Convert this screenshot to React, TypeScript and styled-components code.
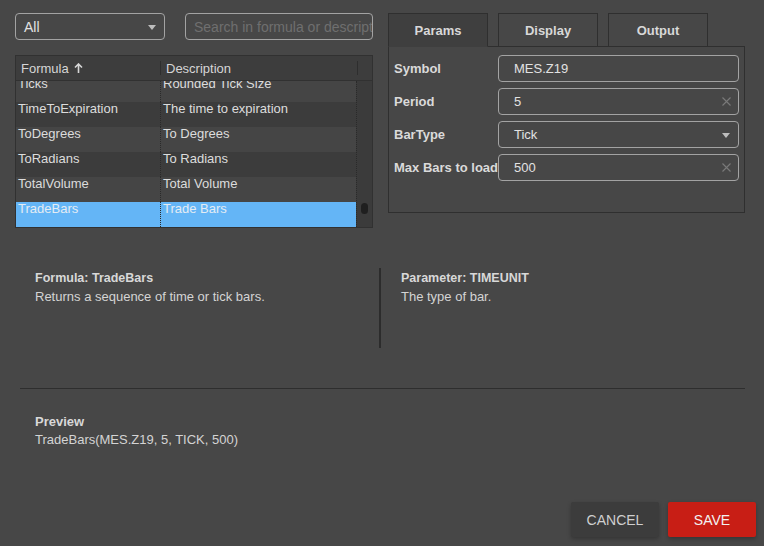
import React from "react";
import styled, { createGlobalStyle } from "styled-components";

const Global = createGlobalStyle`
  html, body { margin: 0; padding: 0; background: #474747; }
  body { font-family: "Liberation Sans", Arial, sans-serif; }
  * { box-sizing: border-box; }
`;

const Page = styled.div`
  width: 764px;
  height: 546px;
  background: #474747;
  color: #dcdcdc;
  display: flex;
  flex-direction: column;
  overflow: hidden;
`;

const Top = styled.div`
  display: flex;
  gap: 15px;
  padding: 13px 0 0 15px;
`;

const LeftCol = styled.div`
  width: 358px;
  display: flex;
  flex-direction: column;
  gap: 15px;
`;

const Filters = styled.div`
  display: flex;
  gap: 20px;
`;

const Field = styled.div<{ $w?: number }>`
  position: relative;
  width: ${(p) => (p.$w ? `${p.$w}px` : "100%")};
  height: 27px;
  border: 1px solid #a3a3a3;
  border-radius: 4px;
  display: flex;
  align-items: center;
  padding-left: ${(p) => (p.$w ? 8 : 15)}px;
  font-size: 13px;
  color: #e2e2e2;
`;

const SelectValue = styled.span`
  font-size: 14px;
`;

const Placeholder = styled.span`
  color: #6f6f6f;
  white-space: nowrap;
  overflow: hidden;
  font-size: 14px;
`;

const Caret = styled.span`
  position: absolute;
  right: 8px;
  top: 11px;
  width: 0;
  height: 0;
  border-left: 4px solid transparent;
  border-right: 4px solid transparent;
  border-top: 5px solid #bdbdbd;
`;

const Clear = styled.svg`
  position: absolute;
  right: 7px;
  top: 8px;
`;

const Table = styled.div`
  width: 358px;
  height: 173px;
  border: 1px solid #313131;
  display: grid;
  grid-template-columns: 1fr 15px;
  grid-template-rows: 25px 1fr;
  background: #3b3b3b;
`;

const HeadRow = styled.div`
  display: grid;
  grid-template-columns: 145px 1fr;
  background: #3d3d3d;
  border-bottom: 1px solid #313131;
  font-size: 13px;
  color: #d6d6d6;
`;

const HeadCell = styled.div<{ $sep?: boolean }>`
  display: flex;
  align-items: center;
  padding-left: 5px;
  gap: 5px;
  position: relative;
  &::after {
    content: "";
    display: ${(p) => (p.$sep ? "block" : "none")};
    position: absolute;
    right: 0;
    top: 5px;
    height: 14px;
    border-right: 1px solid #2e2e2e;
  }
`;

const HeadCorner = styled.div`
  background: #3d3d3d;
  border-bottom: 1px solid #313131;
  position: relative;
  &::before {
    content: "";
    position: absolute;
    left: 0;
    top: 5px;
    height: 14px;
    border-left: 1px solid #2e2e2e;
  }
`;

const Body = styled.div`
  overflow: hidden;
  border-right: 1px dotted #2a2a2a;
`;

const Rows = styled.div`
  margin-top: -4px;
`;

const Row = styled.div<{ $i: number; $sel?: boolean }>`
  display: grid;
  grid-template-columns: 145px 1fr;
  height: 25px;
  font-size: 13px;
  line-height: 14px;
  background: ${(p) => (p.$sel ? "#64b5f6" : p.$i % 2 === 0 ? "#454545" : "#3c3c3c")};
  color: ${(p) => (p.$sel ? "#e4ecf3" : "#dcdcdc")};
`;

const Cell = styled.div<{ $first?: boolean }>`
  padding: 0 0 0 2px;
  white-space: nowrap;
  overflow: hidden;
  border-right: ${(p) => (p.$first ? "1px dotted #2a2a2a" : "none")};
`;

const ScrollTrack = styled.div`
  background: #3b3b3b;
  position: relative;
`;

const Thumb = styled.div`
  position: absolute;
  left: 4px;
  bottom: 13px;
  width: 7px;
  height: 11px;
  border-radius: 4px;
  background: #1f1f1f;
`;

const RightCol = styled.div`
  width: 357px;
  display: flex;
  flex-direction: column;
`;

const Tabs = styled.div`
  display: flex;
  gap: 10px;
  margin-bottom: -1px;
  position: relative;
  z-index: 1;
`;

const Tab = styled.div<{ $active?: boolean }>`
  width: 100px;
  height: 34px;
  border: 1px solid #2f2f2f;
  border-bottom-color: ${(p) => (p.$active ? "#3f3f3f" : "#2f2f2f")};
  background: ${(p) => (p.$active ? "#3f3f3f" : "#474747")};
  display: flex;
  align-items: center;
  justify-content: center;
  font-weight: bold;
  font-size: 13px;
  color: #d8d8d8;
`;

const Panel = styled.div`
  height: 167px;
  border: 1px solid #2f2f2f;
  padding: 8px 5px 0 5px;
  display: flex;
  flex-direction: column;
  gap: 6px;
`;

const ParamRow = styled.div`
  display: flex;
  align-items: center;
`;

const Label = styled.div`
  width: 104px;
  flex: none;
  font-weight: bold;
  font-size: 13px;
  color: #dadada;
  white-space: nowrap;
  overflow: hidden;
`;

const Info = styled.div`
  display: flex;
  margin: 40px 0 0 0;
  padding-left: 35px;
  height: 80px;
`;

const InfoBlock = styled.div`
  width: 344px;
  padding-top: 2px;
  & + & {
    border-left: 2px solid #2c2c2c;
    padding-left: 20px;
  }
`;

const InfoTitle = styled.div`
  font-weight: bold;
  font-size: 12.5px;
  line-height: 16px;
  color: #d8d8d8;
  margin-bottom: 3px;
`;

const InfoText = styled.div`
  font-size: 13px;
  line-height: 16px;
  color: #d4d4d4;
`;

const Rule = styled.hr`
  margin: 40px 19px 0 20px;
  border: none;
  border-top: 1px solid #2e2e2e;
  height: 0;
`;

const Preview = styled.div`
  padding: 23px 0 0 35px;
`;

const PreviewTitle = styled.div`
  font-weight: bold;
  font-size: 13px;
  line-height: 19px;
  color: #d8d8d8;
`;

const PreviewText = styled.div`
  font-size: 13px;
  line-height: 18px;
  color: #d4d4d4;
`;

const Footer = styled.div`
  margin-top: auto;
  display: flex;
  justify-content: flex-end;
  gap: 9px;
  padding: 0 8px 9px 0;
`;

const Button = styled.button<{ $primary?: boolean }>`
  width: 88px;
  height: 35px;
  border: none;
  border-radius: 2px;
  font-family: "Liberation Sans", Arial, sans-serif;
  font-size: 14px;
  background: ${(p) => (p.$primary ? "#c81e15" : "#3c3c3c")};
  color: ${(p) => (p.$primary ? "#f2f2f2" : "#cfcfcf")};
  box-shadow: 0 2px 4px rgba(0, 0, 0, 0.25);
`;

const ClearIcon = () => (
  <Clear width="9" height="9" viewBox="0 0 9 9">
    <path d="M0.5 0.5 L8.5 8.5 M8.5 0.5 L0.5 8.5" stroke="#7a7a7a" strokeWidth="1.1" />
  </Clear>
);

const rows = [
  ["Ticks", "Rounded Tick Size"],
  ["TimeToExpiration", "The time to expiration"],
  ["ToDegrees", "To Degrees"],
  ["ToRadians", "To Radians"],
  ["TotalVolume", "Total Volume"],
  ["TradeBars", "Trade Bars"],
];

export default function App() {
  return (
    <Page>
      <Global />
      <Top>
        <LeftCol>
          <Filters>
            <Field $w={150}>
              <SelectValue>All</SelectValue>
              <Caret />
            </Field>
            <Field $w={188}>
              <Placeholder>Search in formula or descripti</Placeholder>
            </Field>
          </Filters>
          <Table>
            <HeadRow>
              <HeadCell $sep>
                Formula
                <svg width="9" height="10" viewBox="0 0 9 10">
                  <path d="M4.5 1 V10 M1 4.5 L4.5 1 L8 4.5" stroke="#d6d6d6" strokeWidth="1.6" fill="none" />
                </svg>
              </HeadCell>
              <HeadCell>Description</HeadCell>
            </HeadRow>
            <HeadCorner />
            <Body>
              <Rows>
                {rows.map(([f, d], i) => (
                  <Row key={f} $i={i} $sel={i === rows.length - 1}>
                    <Cell $first>{f}</Cell>
                    <Cell>{d}</Cell>
                  </Row>
                ))}
              </Rows>
            </Body>
            <ScrollTrack>
              <Thumb />
            </ScrollTrack>
          </Table>
        </LeftCol>
        <RightCol>
          <Tabs>
            <Tab $active>Params</Tab>
            <Tab>Display</Tab>
            <Tab>Output</Tab>
          </Tabs>
          <Panel>
            <ParamRow>
              <Label>Symbol</Label>
              <Field>MES.Z19</Field>
            </ParamRow>
            <ParamRow>
              <Label>Period</Label>
              <Field>
                5
                <ClearIcon />
              </Field>
            </ParamRow>
            <ParamRow>
              <Label>BarType</Label>
              <Field>
                Tick
                <Caret />
              </Field>
            </ParamRow>
            <ParamRow>
              <Label>Max Bars to load</Label>
              <Field>
                500
                <ClearIcon />
              </Field>
            </ParamRow>
          </Panel>
        </RightCol>
      </Top>
      <Info>
        <InfoBlock>
          <InfoTitle>Formula: TradeBars</InfoTitle>
          <InfoText>Returns a sequence of time or tick bars.</InfoText>
        </InfoBlock>
        <InfoBlock>
          <InfoTitle>Parameter: TIMEUNIT</InfoTitle>
          <InfoText>The type of bar.</InfoText>
        </InfoBlock>
      </Info>
      <Rule />
      <Preview>
        <PreviewTitle>Preview</PreviewTitle>
        <PreviewText>TradeBars(MES.Z19, 5, TICK, 500)</PreviewText>
      </Preview>
      <Footer>
        <Button>CANCEL</Button>
        <Button $primary>SAVE</Button>
      </Footer>
    </Page>
  );
}
